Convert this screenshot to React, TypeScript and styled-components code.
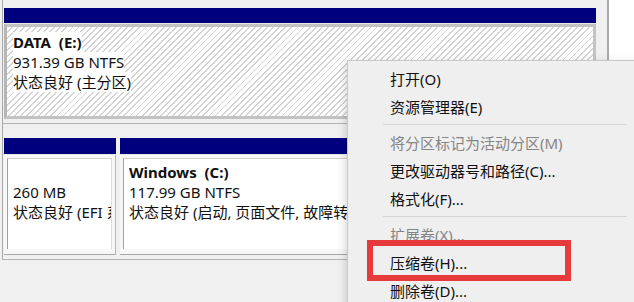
import React from "react";
import styled, { createGlobalStyle } from "styled-components";

const Global = createGlobalStyle`
  html, body { margin: 0; padding: 0; background: #f0f0f0; }
  body { font-family: "Noto Sans", "Noto Sans CJK SC", sans-serif; }
  * { box-sizing: border-box; }
`;

const Screen = styled.div`
  position: relative;
  width: 634px;
  height: 302px;
  overflow: hidden;
  display: flex;
  background: #f0f0f0;
`;

const GraphPane = styled.div`
  width: 607px;
  display: flex;
  flex-direction: column;
  background: #f0f0f0;
`;

const PaneDivider = styled.div`
  width: 2px;
  background: #a9a9a9;
`;

const WhiteArea = styled.div`
  flex: 1;
  background: #ffffff;
`;

const DiskRow = styled.div<{ $top: number; $bottom: number }>`
  margin-left: 2px;
  border-left: 1px solid #a8a8a8;
  border-bottom: 1px solid #b4b4b4;
  padding: ${(p) => p.$top}px 0 ${(p) => p.$bottom}px 1px;
  display: flex;
  gap: 4px;
`;

const Partition = styled.div<{ $width: number }>`
  width: ${(p) => p.$width}px;
  display: flex;
  flex-direction: column;
`;

const Header = styled.div<{ $h: number }>`
  height: ${(p) => p.$h}px;
  background: #00007f;
  border-bottom: 1px solid #e8e8e8;
`;

const SelectedBody = styled.div`
  height: 95px;
  border: 3px solid #c3c3c3;
  border-left-color: #b6b6b6;
  padding: 5px 0 0 6px;
  background: repeating-linear-gradient(
    135deg,
    #ffffff 0px,
    #ffffff 3px,
    #d4d4d4 3px,
    #d4d4d4 4.3px
  );
  overflow: hidden;
`;

const PlainBody = styled.div`
  height: 100px;
  padding: 3px 3px 5px 3px;
  background: #f7f7f7;
  border-bottom: 1px solid #a8a8a8;
  border-right: 1px solid #b8b8b8;
  display: flex;
`;

const PlainInner = styled.div`
  flex: 1;
  background: #ffffff;
  border-left: 1px solid #a0a0a0;
  border-top: 1px solid #cfcfcf;
  border-right: 1px solid #dcdcdc;
  padding: 3px 0 0 5px;
  overflow: hidden;
`;

const Line = styled.div<{ $bold?: boolean }>`
  height: 20px;
  line-height: 20px;
  font-size: 15px;
  font-weight: ${(p) => (p.$bold ? 700 : 400)};
  color: #111;
  white-space: pre;
  overflow: hidden;
`;

const TextChip = styled.span`
  background: #ffffff;
`;

const Menu = styled.div`
  position: absolute;
  left: 347px;
  top: 60px;
  width: 300px;
  height: 260px;
  background: #efefef;
  border: 1px solid #c9c9c9;
  box-shadow: -2px 2px 8px rgba(0, 0, 0, 0.15);
  padding: 3px 0;
`;

const MenuItem = styled.div<{ $disabled?: boolean }>`
  height: 28px;
  display: flex;
  align-items: center;
  padding-left: 42px;
  font-size: 15px;
  color: ${(p) => (p.$disabled ? "#858585" : "#111111")};
  white-space: nowrap;
`;

const Separator = styled.div`
  height: 8px;
  display: flex;
  align-items: center;
  &::after {
    content: "";
    flex: 1;
    height: 1px;
    margin: 0 19px 0 35px;
    background: #d6d6d6;
  }
`;

const Highlight = styled.div`
  position: absolute;
  left: 19px;
  top: 179px;
  width: 204px;
  height: 41px;
  border: 6px solid #e63a3c;
`;

export default function App() {
  return (
    <>
      <Global />
      <Screen>
        <GraphPane>
          <DiskRow $top={8} $bottom={4}>
            <Partition $width={592}>
              <Header $h={16} />
              <SelectedBody>
                <Line $bold>
                  <TextChip>DATA  (E:)</TextChip>
                </Line>
                <Line>
                  <TextChip>931.39 GB NTFS</TextChip>
                </Line>
                <Line>
                  <TextChip>状态良好 (主分区)</TextChip>
                </Line>
              </SelectedBody>
            </Partition>
          </DiskRow>
          <DiskRow $top={14} $bottom={4}>
            <Partition $width={112}>
              <Header $h={17} />
              <PlainBody>
                <PlainInner>
                  <Line> </Line>
                  <Line>260 MB</Line>
                  <Line>状态良好 (EFI 系统分区)</Line>
                </PlainInner>
              </PlainBody>
            </Partition>
            <Partition $width={476}>
              <Header $h={17} />
              <PlainBody>
                <PlainInner>
                  <Line $bold>Windows  (C:)</Line>
                  <Line>117.99 GB NTFS</Line>
                  <Line>状态良好 (启动, 页面文件, 故障转储, 基本数据分区)</Line>
                </PlainInner>
              </PlainBody>
            </Partition>
          </DiskRow>
        </GraphPane>
        <PaneDivider />
        <WhiteArea />
        <Menu>
          <MenuItem>打开(O)</MenuItem>
          <MenuItem>资源管理器(E)</MenuItem>
          <Separator />
          <MenuItem $disabled>将分区标记为活动分区(M)</MenuItem>
          <MenuItem>更改驱动器号和路径(C)...</MenuItem>
          <MenuItem>格式化(F)...</MenuItem>
          <Separator />
          <MenuItem $disabled>扩展卷(X)...</MenuItem>
          <MenuItem>压缩卷(H)...</MenuItem>
          <MenuItem>删除卷(D)...</MenuItem>
          <Highlight />
        </Menu>
      </Screen>
    </>
  );
}
